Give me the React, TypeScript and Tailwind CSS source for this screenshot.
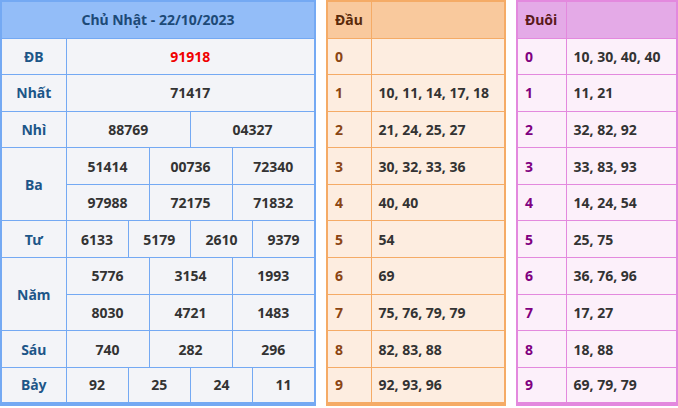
import React from "react";

const rowsH = "h-[36.6px]";

function Main() {
  const td = "border border-[#74a9f3] text-center text-[#333] " + rowsH;
  const lab = "border border-[#74a9f3] text-center text-[#1d5688] " + rowsH;
  const cells = (vals: string[], span: number, extra = "") =>
    vals.map((v, i) => (
      <td key={i} colSpan={span} className={td + " " + extra}>
        {v}
      </td>
    ));
  return (
    <table className="w-[316px] table-fixed border-collapse border-2 border-b-4 border-[#74a9f3] bg-[#f3f4f8]">
      <colgroup>
        <col className="w-[65px]" />
        {Array.from({ length: 12 }).map((_, i) => (
          <col key={i} />
        ))}
      </colgroup>
      <tbody>
        <tr>
          <td colSpan={13} className="h-[37px] border border-[#74a9f3] bg-[#93bdf8] text-center text-[#1d4a77]">
            Chủ Nhật - 22/10/2023
          </td>
        </tr>
        <tr>
          <td className={lab}>ĐB</td>
          {cells(["91918"], 12, "!text-[#f00000]")}
        </tr>
        <tr>
          <td className={lab}>Nhất</td>
          {cells(["71417"], 12)}
        </tr>
        <tr>
          <td className={lab}>Nhì</td>
          {cells(["88769", "04327"], 6)}
        </tr>
        <tr>
          <td rowSpan={2} className={lab}>Ba</td>
          {cells(["51414", "00736", "72340"], 4)}
        </tr>
        <tr>{cells(["97988", "72175", "71832"], 4)}</tr>
        <tr>
          <td className={lab}>Tư</td>
          {cells(["6133", "5179", "2610", "9379"], 3)}
        </tr>
        <tr>
          <td rowSpan={2} className={lab}>Năm</td>
          {cells(["5776", "3154", "1993"], 4)}
        </tr>
        <tr>{cells(["8030", "4721", "1483"], 4)}</tr>
        <tr>
          <td className={lab}>Sáu</td>
          {cells(["740", "282", "296"], 4)}
        </tr>
        <tr>
          <td className={lab}>Bảy</td>
          {cells(["92", "25", "24", "11"], 3)}
        </tr>
      </tbody>
    </table>
  );
}

function Side({
  title, data, w, c1, border, head, body, digit, headText,
}: {
  title: string; data: string[]; w: string; c1: string; border: string; head: string; body: string; digit: string; headText: string;
}) {
  return (
    <table className={`${w} table-fixed border-collapse border-2 border-b-4 ${border} ${body}`}>
      <colgroup>
        <col className={c1} />
        <col />
      </colgroup>
      <tbody>
        <tr className={head}>
          <td className={`h-[37px] border ${border} px-[7px] ${headText}`}>{title}</td>
          <td className={`border ${border}`}></td>
        </tr>
        {data.map((d, i) => (
          <tr key={i}>
            <td className={`${rowsH} border ${border} px-[7px] ${digit}`}>{i}</td>
            <td className={`border ${border} px-[7px] text-[#333]`}>{d}</td>
          </tr>
        ))}
      </tbody>
    </table>
  );
}

export default function App() {
  return (
    <div className="flex w-[678px] h-[408px] items-start gap-[10px] bg-white pl-0 font-['Liberation_Sans',Arial,sans-serif] text-[14px] font-bold">
      <Main />
      <Side
        title="Đầu"
        data={["", "10, 11, 14, 17, 18", "21, 24, 25, 27", "30, 32, 33, 36", "40, 40", "54", "69", "75, 76, 79, 79", "82, 83, 88", "92, 93, 96"]}
        w="w-[180px]" c1="w-[44px]" border="border-[#f5ab66]" head="bg-[#f9c99d]" body="bg-[#fdede0]" digit="text-[#8b4513]" headText="text-[#5a2a0a]"
      />
      <Side
        title="Đuôi"
        data={["10, 30, 40, 40", "11, 21", "32, 82, 92", "33, 83, 93", "14, 24, 54", "25, 75", "36, 76, 96", "17, 27", "18, 88", "69, 79, 79"]}
        w="w-[162px]" c1="w-[49px]" border="border-[#e389de]" head="bg-[#e4aae7]" body="bg-[#fcf0fa]" digit="text-[#800080]" headText="text-[#5a1a1a]"
      />
    </div>
  );
}
